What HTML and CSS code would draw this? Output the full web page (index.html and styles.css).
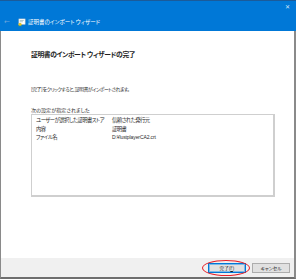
FILE: index.html
```html
<!DOCTYPE html>
<html lang="ja">
<head>
    <meta charset="UTF-8">
    <title>証明書のインポート ウィザード</title>
    <link rel="stylesheet" href="styles.css">
</head>
<body>
    <div class="window">
        <div class="titlebar">
            <div class="close">✕</div>
            <div class="title-row">
                <span class="back">←</span>
                <svg class="cert" width="8" height="9" viewBox="0 0 9 9">
                    <rect x="1" y="0.5" width="7" height="6" fill="#fff" stroke="#c9c9c9" stroke-width="0.6"/>
                    <rect x="2" y="2" width="4.5" height="0.7" fill="#8aa"/>
                    <rect x="2" y="3.4" width="3.5" height="0.7" fill="#8aa"/>
                    <circle cx="2.3" cy="6.5" r="1.8" fill="#e6c229"/>
                    <path d="M1 7.5 L0.5 9 L2 8.4 Z" fill="#6bb33c"/>
                    <path d="M3.5 7.5 L4 9 L2.6 8.4 Z" fill="#6bb33c"/>
                </svg>
                <span class="title">証明書のインポート ウィザード</span>
            </div>
        </div>
        <div class="content">
            <h1>証明書のインポート ウィザードの完了</h1>
            <p class="lead">[完了] をクリックすると、証明書がインポートされます。</p>
            <p class="label">次の設定が指定されました</p>
            <div class="list">
                <div class="row"><span class="key">ユーザーが選択した証明書ストア</span><span>信頼された発行元</span></div>
                <div class="row"><span class="key">内容</span><span>証明書</span></div>
                <div class="row"><span class="key">ファイル名</span><span class="latin">D:¥lustplayerCA2.crt</span></div>
            </div>
        </div>
        <div class="footer">
            <div class="btn-wrap">
                <button class="btn primary">完了(<u>F</u>)</button>
                <div class="mark"></div>
            </div>
            <button class="btn">キャンセル</button>
        </div>
    </div>
</body>
</html>
```

FILE: styles.css
```css
* {
    margin: 0;
    padding: 0;
    box-sizing: border-box;
}

body {
    width: 296px;
    height: 279px;
    overflow: hidden;
    background: #fff;
    font-family: "Noto Sans CJK JP", "Noto Sans", sans-serif;
    font-feature-settings: "palt";
    color: #1a1a1a;
}

.window {
    height: 279px;
    display: flex;
    flex-direction: column;
    border-left: 1px solid #8a8a8a;
    border-right: 2px solid #8a8a8a;
    border-bottom: 2px solid #6e6e6e;
}

.titlebar {
    position: relative;
    height: 31px;
    background: #0078d7;
    border-top: 1px solid #1b5b9a;
    margin: 0 -2px 0 -1px;
    display: flex;
    align-items: flex-end;
}

.close {
    position: absolute;
    top: 2px;
    right: 6px;
    color: #cfe4f7;
    font-size: 6px;
    font-family: "DejaVu Sans", sans-serif;
}

.title-row {
    display: flex;
    align-items: center;
    height: 10px;
    margin-bottom: 4px;
    padding-left: 4px;
}

.back {
    color: #6fa6dc;
    font-family: "DejaVu Sans", sans-serif;
    font-size: 7px;
    width: 14px;
}

.cert {
    margin-right: 2px;
}

.title {
    color: #fff;
    font-size: 5.5px;
}

.content {
    flex: 1;
    padding: 18px 19px 0 30px;
}

h1 {
    font-size: 6.8px;
    font-weight: 700;
    letter-spacing: -0.4px;
    color: #1e1e1e;
    line-height: 10px;
}

.lead {
    font-size: 4.9px;
    letter-spacing: -0.5px;
    line-height: 7px;
    margin-top: 26px;
    color: #2a2a2a;
}

.label {
    font-size: 5.1px;
    line-height: 7px;
    margin-top: 14px;
    color: #2a2a2a;
}

.list {
    margin-top: 1px;
    height: 83px;
    border: 1px solid #cfcfcf;
    border-right-width: 2px;
    border-bottom-width: 2px;
    padding: 1px 4px;
}

.row {
    display: flex;
    font-size: 5.3px;
    letter-spacing: -0.5px;
    line-height: 8.5px;
    color: #2a2a2a;
    white-space: nowrap;
}

.key {
    width: 76px;
}

.latin {
    font-family: "Liberation Sans", sans-serif;
    font-size: 5px;
    letter-spacing: -0.1px;
}

.footer {
    height: 19px;
    background: #f0f0f0;
    display: flex;
    justify-content: flex-end;
    align-items: center;
    gap: 6px;
    padding-right: 4px;
}

.btn-wrap {
    position: relative;
}

.btn {
    width: 38px;
    height: 10px;
    background: #e1e1e1;
    border: 1px solid #adadad;
    font-family: "Noto Sans CJK JP", sans-serif;
    font-feature-settings: "palt";
    font-size: 4.6px;
    line-height: 8px;
    color: #1a1a1a;
    display: block;
}

.btn.primary {
    border: 1px solid #0078d7;
    box-shadow: inset 0 0 0 1px #7fb9e6;
}

.mark {
    position: absolute;
    left: -6px;
    top: -3px;
    width: 48px;
    height: 16px;
    border: 1.4px solid #e5202a;
    border-radius: 50%;
}
```
